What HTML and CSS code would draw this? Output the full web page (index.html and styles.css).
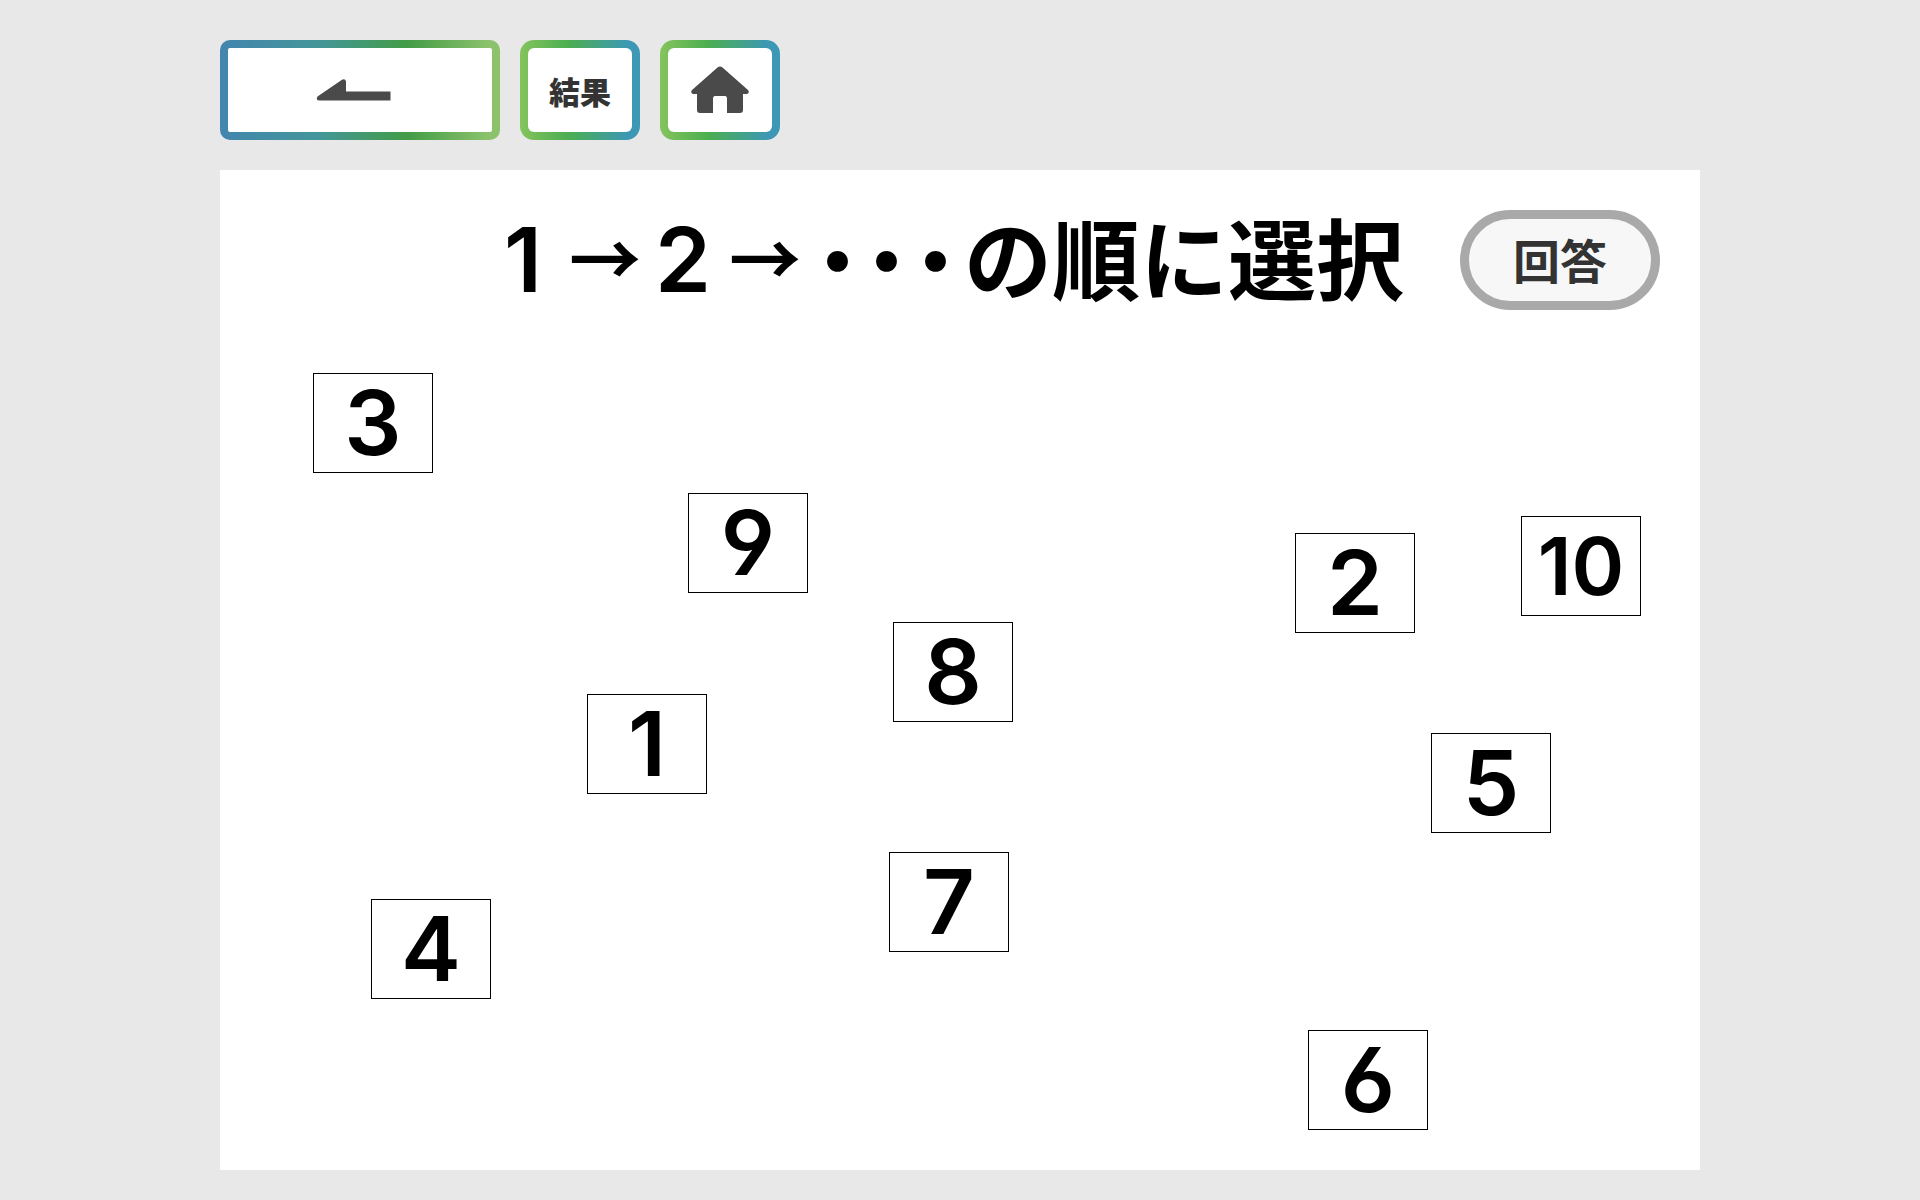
FILE: index.html
```html
<!DOCTYPE html>
<html lang="ja">
  <head>
    <meta charset="utf-8">
    <meta name="viewport" content="width=device-width, initial-scale=1.0">
    <title>1→2→・・・の順に選択</title>
    <link rel="stylesheet" href="styles.css">
  </head>
  <body>
    <nav class="menu">
      <button type="button" class="menu-btn back" aria-label="戻る">
        <svg width="88" height="22" viewBox="0 0 88 22">
          <path d="M1.500 17.500 26 .8q3-1.500 4 1.500V12.500h44.500V21.500H3q-3.500-.5-1.500-4z" fill="#4a4a4a"/>
        </svg>
      </button>
      <button type="button" class="menu-btn">結果</button>
      <button type="button" class="menu-btn" aria-label="ホーム">
        <svg width="60" height="48" viewBox="0 0 60 48">
          <path d="M27.500 1.500q2.500-2 5 0L58 24q2 3-1 4h-4v16q0 3-3 3H37V33q0-3-2-3h-10q-2 0-2 3v14H10q-3 0-3-3V28H3q-3-1-1-4z" fill="#4a4a4a"/>
        </svg>
      </button>
    </nav>
    <main class="board">
      <header class="head">
        <h1 class="title">
          <span class="digit">1</span><span class="arrow">→</span><span class="digit">2</span><span class="arrow">→</span><span class="dots">・・・</span><span class="kanji">の順に選択</span>
        </h1>
        <button type="button" class="answer">回答</button>
      </header>
      <button type="button" class="card c1">1</button>
      <button type="button" class="card c2">2</button>
      <button type="button" class="card c3">3</button>
      <button type="button" class="card c4">4</button>
      <button type="button" class="card c5">5</button>
      <button type="button" class="card c6">6</button>
      <button type="button" class="card c7">7</button>
      <button type="button" class="card c8">8</button>
      <button type="button" class="card c9">9</button>
      <button type="button" class="card c10">10</button>
    </main>
  </body>
</html>
```
FILE: styles.css
```css
* {
box-sizing: border-box;
}
body {
margin: 0;
padding: 40px 220px 30px;
background-color: #e8e8e8;
font-family: Inter, "Noto Sans CJK JP", sans-serif;
}
button {
padding: 0;
font-family: inherit;
cursor: pointer;
}
.menu {
display: flex;
gap: 20px;
margin-bottom: 30px;
}
.menu-btn {
display: flex;
align-items: center;
justify-content: center;
width: 120px;
height: 100px;
border: 8px solid transparent;
border-radius: 14px;
background: linear-gradient(white, white) padding-box, linear-gradient(90deg, #84c45c, #4cae50 40%, #3c98b4 90%) border-box;
color: #333;
font-family: "Noto Sans CJK JP", sans-serif;
font-size: 31px;
font-weight: 900;
}
.back {
width: 280px;
border-radius: 10px;
background: linear-gradient(white, white) padding-box, linear-gradient(90deg, #4385ae, #43969a 35%, #429c46 67%, #8dc26c 96%) border-box;
}
.board {
position: relative;
min-height: 1000px;
background-color: white;
}
.head {
display: flex;
align-items: center;
justify-content: flex-end;
gap: 56px;
padding: 40px 40px 0 0;
}
.title {
display: flex;
align-items: center;
gap: 4px;
height: 100px;
margin: 0;
font-size: 90px;
font-weight: 600;
line-height: 100px;
}
/* open six and nine */
.title, .card {
font-feature-settings: "cv03", "cv04";
}
.digit {
min-width: 60px;
text-align: center;
}
.arrow, .dots, .kanji {
padding-bottom: 10px;
font-family: "Noto Sans CJK JP", sans-serif;
}
.arrow {
margin: 0 8px 0 12px;
font-size: 72px;
}
.dots {
font-size: 98px;
font-weight: 400;
font-feature-settings: "palt";
}
.kanji {
font-size: 88px;
}
.answer {
width: 200px;
height: 100px;
padding-bottom: 4px;
border: 9px solid #a9a9a9;
border-radius: 50px;
background-color: #f7f7f7;
color: #333;
font-family: "Noto Sans CJK JP", sans-serif;
font-size: 47px;
font-weight: 700;
}
.card {
position: absolute;
width: 120px;
height: 100px;
border: 1px solid black;
background-color: white;
color: black;
font-size: 90px;
font-weight: 600;
line-height: 94px;
}
.c1 { left: 367px; top: 524px; }
.c2 { left: 1075px; top: 363px; }
.c3 { left: 93px; top: 203px; }
.c4 { left: 151px; top: 729px; }
.c5 { left: 1211px; top: 563px; }
.c6 { left: 1088px; top: 860px; }
.c7 { left: 669px; top: 682px; }
.c8 { left: 673px; top: 452px; }
.c9 { left: 468px; top: 323px; }
.c10 { left: 1301px; top: 346px; font-size: 80px; }
```
